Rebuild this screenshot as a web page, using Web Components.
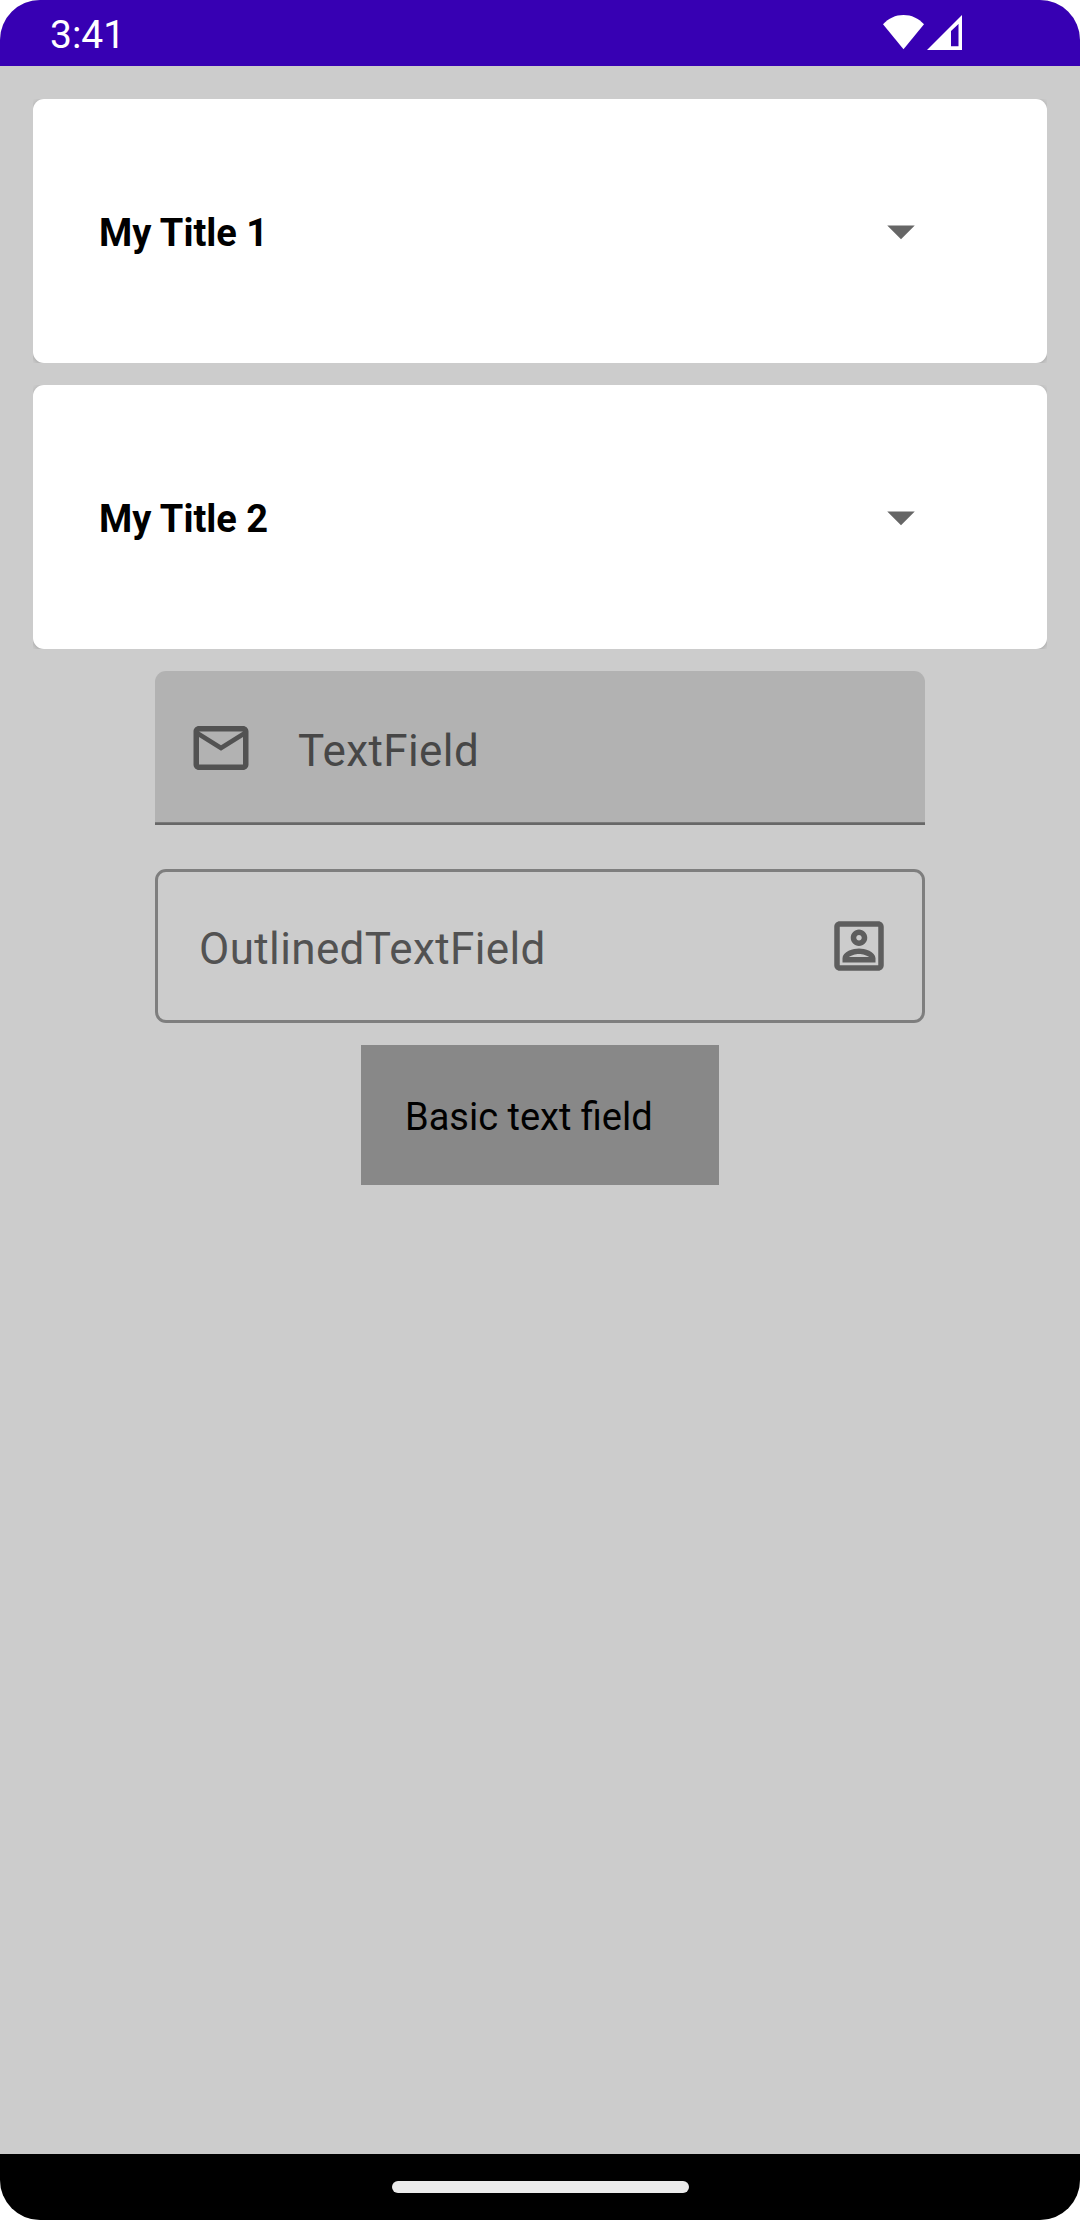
<!DOCTYPE html>
<html lang="en">
<head>
<meta charset="utf-8">
<title>Fields</title>
<style>html,body{margin:0;background:#fff}</style>
</head>
<body>
<app-screen></app-screen>
<script>
const define = (name, html) => {
  const t = document.createElement('template');
  t.innerHTML = html;
  customElements.define(name, class extends HTMLElement {
    constructor() {
      super();
      this.attachShadow({ mode: 'open' }).append(t.content.cloneNode(true));
    }
  });
};

define('status-bar', `
<style>
:host{display:flex;height:66px;flex:none;box-sizing:border-box;justify-content:space-between;align-items:flex-start;background:#3700b3;color:#fff;padding:0 117px 0 50px}
span{font-size:39px;line-height:46px;padding-top:12px}
svg{display:block;margin-top:14px}
</style>
<span><slot></slot></span>
<svg width="81" height="38" viewBox="882 14 81 38" fill="#fff">
<path d="M903.5 49.3 883 24.3C888.5 18.3 895.5 15 903.5 15S918.500 18.300 924 24.300Z"/>
<path fill-rule="evenodd" d="M927 50 962 15V50ZM951 31V46.300H958.500V24Z"/>
</svg>`);

define('title-card', `
<style>
:host{display:block;height:264px;overflow:hidden}
.surface{display:flex;height:100%;box-sizing:border-box;align-items:center;justify-content:space-between;background:#fff;border-radius:11px;padding:0 113px 0 66px;box-shadow:0 1px 5px rgba(0,0,0,.22)}
span{font-size:38px;font-weight:700;line-height:46px;padding-top:4px;color:#000}
svg{display:block}
</style>
<div class="surface"><span><slot></slot></span>
<svg width="66" height="66" viewBox="0 0 24 24" fill="#666"><path d="M7 10l5 5 5-5z"/></svg></div>`);

define('filled-field', `
<style>
:host{display:flex;width:770px;height:154px;box-sizing:border-box;align-items:center;gap:44px;padding-left:33px;background:linear-gradient(#7a7a7a,#7a7a7a) 0 151px/100% 1px no-repeat,linear-gradient(#676767,#676767) 0 152px/100% 2px no-repeat,#b2b2b2;border-radius:11px 11px 0 0}
span{font-size:44px;letter-spacing:.4px;line-height:52px;padding-top:6px;color:#474747}
svg{display:block}
</style>
<svg width="66" height="66" viewBox="0 0 24 24" fill="#525252"><path d="M22 6c0-1.100-.9-2-2-2H4c-1.100 0-2 .9-2 2v12c0 1.100.9 2 2 2h16c1.100 0 2-.9 2-2V6zm-2 0l-8 5-8-5h16zm0 12H4V8l8 5 8-5v10z"/></svg>
<span><slot></slot></span>`);

define('outlined-field', `
<style>
:host{display:flex;width:770px;height:154px;box-sizing:border-box;align-items:center;justify-content:space-between;padding:0 30px 0 41px;border:3px solid #7e7e7e;border-radius:11px}
span{font-size:44px;letter-spacing:.38px;line-height:52px;padding-top:6px;color:#525252}
svg{display:block}
</style>
<span><slot></slot></span>
<svg width="66" height="66" viewBox="0 0 24 24" fill="#5e5e5e"><path d="M19 5v14H5V5h14m0-2H5c-1.100 0-2 .9-2 2v14c0 1.100.9 2 2 2h14c1.100 0 2-.9 2-2V5c0-1.100-.9-2-2-2zm-7 9c-1.650 0-3-1.350-3-3s1.350-3 3-3 3 1.350 3 3-1.350 3-3 3zm0-4c-.55 0-1 .45-1 1s.45 1 1 1 1-.45 1-1-.45-1-1-1zm6 10H6v-1.530c0-2.500 3.970-3.580 6-3.580s6 1.080 6 3.580V18zm-9.690-2h7.380c-.69-.56-2.380-1.120-3.690-1.120s-3.010.56-3.690 1.120z"/></svg>`);

define('basic-field', `
<style>
:host{display:flex;width:358px;height:140px;box-sizing:border-box;align-items:center;padding-left:44px;background:#888;color:#000}
span{font-size:38px;line-height:46px;padding-top:4px}
</style>
<span><slot></slot></span>`);

define('nav-bar', `
<style>
:host{display:flex;height:66px;flex:none;align-items:center;justify-content:center;background:#000}
i{width:297px;height:12px;border-radius:6px;background:#ebebeb}
</style><i></i>`);

define('app-screen', `
<style>
:host{display:flex;flex-direction:column;width:1080px;height:2220px;overflow:hidden;border-radius:40px;background:#ccc;font-family:Roboto,sans-serif}
main{flex:1;display:flex;flex-direction:column;align-items:center;gap:22px;padding-top:33px}
title-card{width:1014px}
outlined-field{margin-top:22px}
</style>
<status-bar>3:41</status-bar>
<main>
<title-card>My Title 1</title-card>
<title-card>My Title 2</title-card>
<filled-field>TextField</filled-field>
<outlined-field>OutlinedTextField</outlined-field>
<basic-field>Basic text field</basic-field>
</main>
<nav-bar></nav-bar>`);
</script>
</body>
</html>
